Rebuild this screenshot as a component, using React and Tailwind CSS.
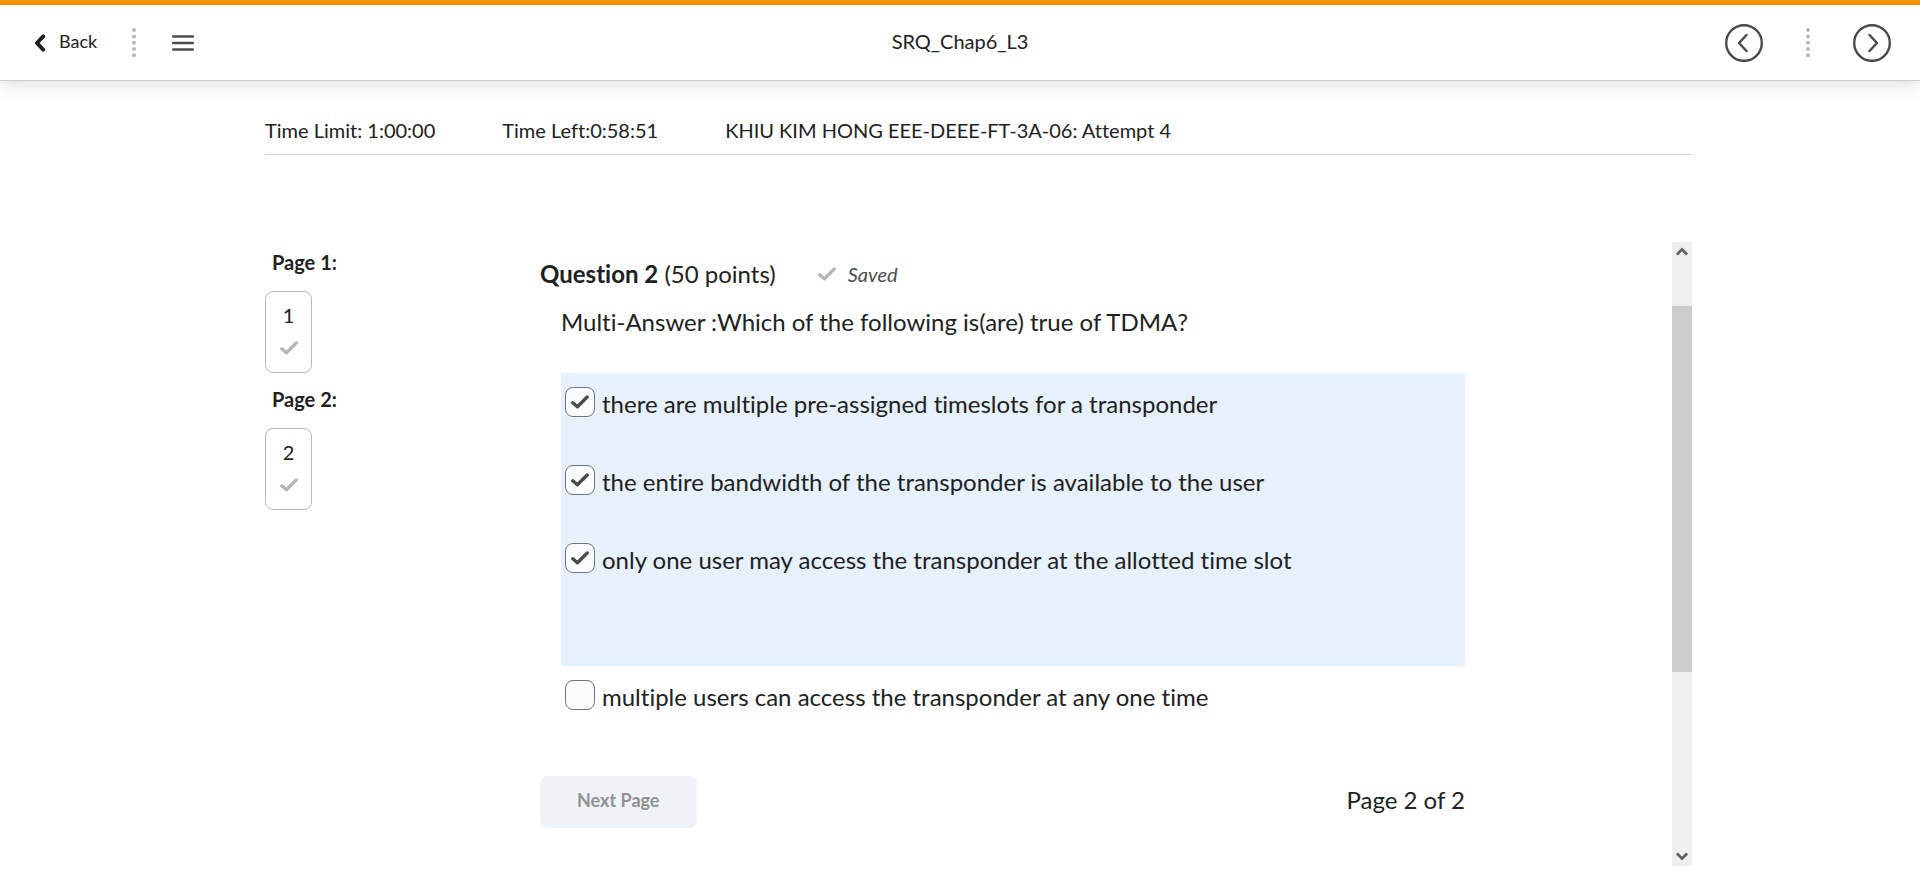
import { useState } from "react";

const questions = [1, 2];

const answers = [
  { id: "a1", text: "there are multiple pre-assigned timeslots for a transponder", checked: true },
  { id: "a2", text: "the entire bandwidth of the transponder is available to the user", checked: true },
  { id: "a3", text: "only one user may access the transponder at the allotted time slot", checked: true },
  { id: "a4", text: "multiple users can access the transponder at any one time", checked: false },
];

function Check({ className }) {
  return (
    <svg viewBox="0 0 18 14" className={className} fill="none" stroke="currentColor" strokeLinecap="round" strokeLinejoin="round" aria-hidden="true">
      <path d="M1.8 7.8 6.4 11.8 16.2 2" strokeWidth="3.4" />
    </svg>
  );
}

function Dots() {
  return (
    <svg viewBox="0 0 4 30" className="h-[30px] w-1 text-[#b1b9be]" fill="currentColor" aria-hidden="true">
      {[2, 8.4, 14.7, 21, 27.3].map((y) => (
        <circle key={y} cx="2" cy={y} r="2" />
      ))}
    </svg>
  );
}

function Chevron({ up }) {
  return (
    <svg viewBox="0 0 12 9" className="h-[9px] w-3" fill="none" stroke="#606060" strokeWidth="2.8" aria-hidden="true">
      <path d={up ? "M1 7.6 6 2.4 11 7.6" : "M1 1.4 6 6.6 11 1.4"} />
    </svg>
  );
}

function RoundArrow({ label, d }) {
  return (
    <button type="button" aria-label={label}>
      <svg viewBox="0 0 38 38" className="size-[38px]" fill="none" stroke="#494c4e" strokeLinecap="round" strokeLinejoin="round">
        <circle cx="19" cy="19" r="17.8" strokeWidth="2.4" />
        <path d={d} strokeWidth="2.5" />
      </svg>
    </button>
  );
}

function Answer({ answer, checked, onToggle }) {
  return (
    <div className="flex h-[30px] items-center gap-[7px]">
      <span className="grid size-[30px] shrink-0 place-items-center">
        <input
          id={answer.id}
          type="checkbox"
          checked={checked}
          onChange={onToggle}
          className="col-start-1 row-start-1 size-[30px] appearance-none rounded-lg border border-[#6e7376] bg-[#fafbff]"
        />
        {checked && <Check className="pointer-events-none col-start-1 row-start-1 h-[14px] w-[18px] text-[#494c4e]" />}
      </span>
      <label htmlFor={answer.id} className="pt-1">{answer.text}</label>
    </div>
  );
}

export default function App() {
  const [state, setState] = useState(() => Object.fromEntries(answers.map((a) => [a.id, a.checked])));
  const row = (a) => (
    <Answer key={a.id} answer={a} checked={state[a.id]} onToggle={() => setState({ ...state, [a.id]: !state[a.id] })} />
  );

  return (
    <div className="flex min-h-screen flex-col bg-white font-[Lato,sans-serif] text-xl text-[#202122] [font-variant-ligatures:none]">
      <header className="border-b border-[#cdcfd1] shadow-[0_4px_18px_rgba(0,0,0,0.12)]">
        <div className="h-[5px] bg-linear-to-b from-[#fc9700] to-[#e98d00]" />
        <div className="grid h-[75px] grid-cols-[1fr_auto_1fr] items-center px-[29px]">
          <div className="flex items-center pl-[5px]">
            <a href="#back" className="flex items-center gap-[13px] text-lg">
              <svg viewBox="0 0 12 18" className="h-[18px] w-3" fill="none" stroke="currentColor" strokeWidth="4" strokeLinecap="round" strokeLinejoin="round" aria-hidden="true">
                <path d="M9.2 2.4 3 9l6.2 6.6" />
              </svg>
              <span className="pb-[3px]">Back</span>
            </a>
            <div className="ml-[35px] mr-9"><Dots /></div>
            <button type="button" aria-label="Menu">
              <svg viewBox="0 0 22 16" className="h-4 w-[22px]" fill="none" stroke="#494c4e" strokeWidth="2.5" strokeLinecap="round">
                <path d="M1.2 1.5h19.6M1.2 8h19.6M1.2 14.5h19.6" />
              </svg>
            </button>
          </div>
          <h1 className="pb-[3px]">SRQ_Chap6_L3</h1>
          <div className="flex items-center justify-end gap-[43px]">
            <RoundArrow label="Previous" d="M21.5 11 14 19l7.5 8" />
            <Dots />
            <RoundArrow label="Next" d="M16.5 11 24 19l-7.5 8" />
          </div>
        </div>
      </header>

      <main className="pl-[265px] pr-[228px] pt-8">
        <div className="flex h-[42px] gap-[67px] border-b border-[#cdd5dc] pt-[3px]">
          <span>Time Limit: 1:00:00</span>
          <span>Time Left:0:58:51</span>
          <span>KHIU KIM HONG EEE-DEEE-FT-3A-06: Attempt 4</span>
        </div>

        <div className="mt-[87px] flex">
          <nav className="flex w-[275px] shrink-0 flex-col pt-[6px]">
            {questions.map((n) => (
              <section key={n} className="mb-3">
                <h2 className="pb-[15px] pl-[7px] font-bold">Page {n}:</h2>
                <a href={`#question-${n}`} className="flex h-[82px] w-[47px] flex-col items-center rounded-lg border border-[#b1b9be] pt-[9px]">
                  {n}
                  <Check className="mt-3 h-[14px] w-[18px] text-[#b1b9be]" />
                </a>
              </section>
            ))}
          </nav>

          <article className="flex-1 pt-4 text-2xl">
            <div className="flex items-center">
              <h2><b>Question 2</b> (50 points)</h2>
              <Check className="ml-[42px] mr-3 h-[14px] w-[18px] text-[#b1b9be]" />
              <span className="text-xl italic text-[#494c4e]">Saved</span>
            </div>
            <div className="pl-[21px] pt-4">
              <p>Multi-Answer :Which of the following is(are) true of TDMA?</p>
              <div className="mt-[35px] flex flex-col gap-12 bg-[#e7f1fc] pb-[93px] pl-1 pt-[14px]">
                {answers.slice(0, 3).map(row)}
              </div>
              <div className="pl-1 pt-[14px]">{row(answers[3])}</div>
            </div>
            <div className="flex items-center justify-between pt-[66px]">
              <button type="button" disabled className="h-[52px] rounded-lg bg-[#eff3f8] px-[37px] pb-1 text-lg font-bold text-[#909192]">
                Next Page
              </button>
              <span className="pb-1">Page 2 of 2</span>
            </div>
          </article>

          <div className="ml-[207px] flex w-5 flex-col bg-[#efefef]" aria-hidden="true">
            <div className="flex h-16 justify-center pt-[5px]"><Chevron up /></div>
            <div className="h-[366px] bg-[#cccccc]" />
            <div className="flex h-[194px] items-end justify-center pb-[5px]"><Chevron /></div>
          </div>
        </div>
      </main>
    </div>
  );
}
